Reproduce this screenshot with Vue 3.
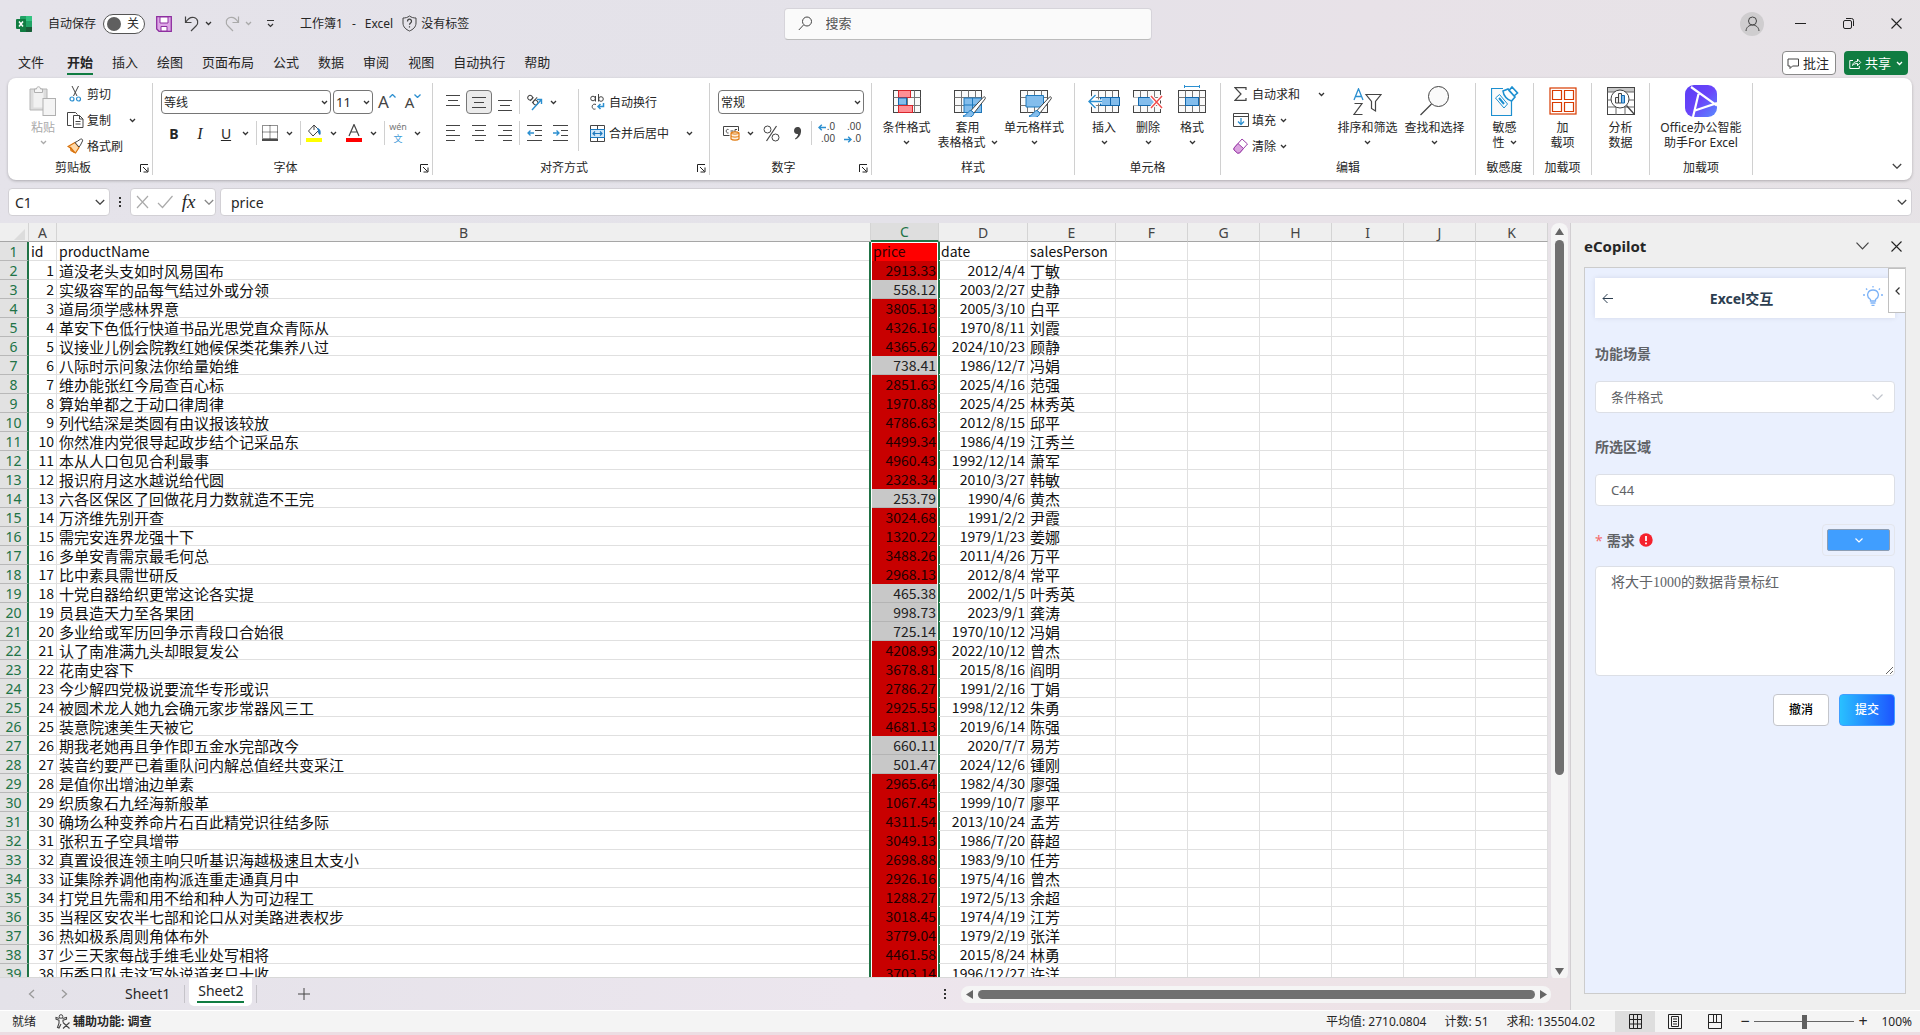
<script setup>
import { h, ref } from 'vue'

const K = '#444'
const grid = (w, hh) =>
  `<rect x=".5" y=".5" width="${w}" height="${hh}" fill="#fafafa" stroke="#444"/><path d="M.5 7.5h${w}M.5 15.5h${w}M7.5.5v${hh}M14.5.5v${hh}M21.5.5v${hh}" stroke="#777"/>`

const icons = {
  excel: '<rect x="4" y="0" width="12" height="16" rx="1" fill="#21a366" stroke="none"/><path d="M4 8h6v8H5a1 1 0 0 1-1-1z" fill="#107c41" stroke="none"/><path d="M10 0h5a1 1 0 0 1 1 1v4h-6z" fill="#33c481" stroke="none"/><path d="M10 11h6v4a1 1 0 0 1-1 1h-5z" fill="#185c37" stroke="none"/><rect x="0" y="3" width="10" height="10" rx="1" fill="#107c41" stroke="none"/><path d="M3 5.500l4 5M7 5.500l-4 5" stroke="#fff" stroke-width="1.500"/>',
  save: '<path d="M.7.7h14.600v14.600H3L.7 13z" fill="#dda6e6" stroke="#8e2fa0" stroke-width="1.300"/><path d="M4 1h8v6H4zM5 15v-4.500h6V15z" fill="#fff" stroke="#8e2fa0"/>',
  undo: '<path d="M1.500 1.500v6h6M1.800 7.200C4 3.500 7 1.800 10 2.500c4 1 5 5.500 2 8.500L7 16" stroke-width="1.200"/>',
  redo: '<path d="M14.500 1.500v6h-6M14.200 7.200C12 3.500 9 1.800 6 2.500c-4 1-5 5.500-2 8.500L9 16" stroke="#aaa" stroke-width="1.200"/>',
  custom: '<path d="M1 1.500h7M2 5l2.500 2.500L7 5" stroke="#333" stroke-width="1.200"/>',
  shield: '<path d="M7.500 1C9.500 2.500 11.500 3 14 3v5c0 4-3 6.500-6.500 8C4 14.500 1 12 1 8V3c2.500 0 4.500-.5 6.500-2z"/><path d="M5.500 6.500c0-3 4-3 4-.3 0 1.800-2 1.700-2 3.600M7.500 11.300v1.200" stroke-width="1.200"/>',
  search: '<circle cx="9" cy="5.500" r="4.500"/><path d="M5.500 9L.8 14"/>',
  person: '<circle cx="7.500" cy="5" r="4"/><path d="M1 15c.5-8 12.500-8 13 0"/>',
  min: '<path d="M0 5.500h11" stroke="#222"/>',
  restore: '<rect x=".5" y="2.500" width="8" height="8" rx="1.500" stroke="#222"/><path d="M3 .5h5.500a2 2 0 0 1 2 2V8" stroke="#222"/>',
  close: '<path d="M.5.5l10 10M10.500.5l-10 10" stroke="#222" stroke-width="1.100"/>',
  comment: '<path d="M1 1h10.500v7H5.500L3 10.500V8H1z"/>',
  share: '<path d="M4 3.500H.8v8h9.500V9M3.500 8.500c.5-3 2.500-4 5-4V2l3.200 3.500L8.500 8.700V6.500c-2 0-3.700.5-5 2z" stroke="#fff"/>',
  chev: '<path d="M1 1l2.500 2.500L6 1" stroke="#333" stroke-width="1.300"/>',
  chevW: '<path d="M1 1l2.500 2.500L6 1" stroke="#fff" stroke-width="1.300"/>',
  chevG: '<path d="M1 1l2.500 2.500L6 1" stroke="#aaa" stroke-width="1.300"/>',
  chevL: '<path d="M.8 1l4.200 4.200L9.200 1" stroke="#444" stroke-width="1.300"/>',
  chevLG: '<path d="M.8 1l4.200 4.200L9.200 1" stroke="#888" stroke-width="1.300"/>',
  chevXL: '<path d="M.5.7l6 6.200 6-6.200" stroke="#444" stroke-width="1.200"/>',
  paste: '<path d="M1 3h17v21H1z" fill="#ddd" stroke="#b5b5b5"/><path d="M4.500 5.500h10v16h-10z" fill="#f1f1f1" stroke="none"/><path d="M5.500 6.500V3h2c0-3 4-3 4 0h2v3.500z" fill="#f6f6f6" stroke="#b0b0b0"/><rect x="14" y="12.500" width="12.500" height="17" fill="#f4f4f4" stroke="#b0b0b0"/>',
  cut: '<path d="M3 0l5 10M9.500 0L4.500 10"/><circle cx="3" cy="13" r="2" stroke="#2b8fd0" stroke-width="1.200"/><circle cx="9.500" cy="13" r="2" stroke="#2b8fd0" stroke-width="1.200"/>',
  copy: '<path d="M4.500 13.500h-4V.5h8l2 2"/><path d="M6.500 3.500h6l3.500 3.500v8.500H6.500zM12.500 3.500V7H16M8.500 9.500h5M8.500 12h5"/>',
  brush: '<path d="M1 8.500l7-4 4 5-3.500 5.500L4 12.500 3.500 10z" fill="#ffd9a8" stroke="#d9730d" stroke-width="1.200"/><path d="M3 9l4.500 5.500" stroke="#d9730d" stroke-width="1.500"/><path d="M8 4.500l4 4.500 1.500-2L15.500 3a1.400 1.400 0 0 0-2-1.800l-3 2z" fill="#fff"/>',
  up: '<path d="M.5 3.500L3.500.5l3 3" stroke="#2b8fd0" stroke-width="1.300"/>',
  down: '<path d="M.5.5l3 3 3-3" stroke="#2b8fd0" stroke-width="1.300"/>',
  borders: '<path d="M.5.5h15v13H.5zM8 .5v13M.5 7h15" stroke-dasharray="1 1" stroke="#222"/><path d="M0 15h16" stroke="#111" stroke-width="1.500"/>',
  fill: '<path d="M8 1L2.500 7 7 12l6-6zM8 1v5" fill="#fff"/><path d="M11.500 4.500c2.500.5 3 3 2.500 6-1.500-1-2-2.500-1.500-4z" fill="#1d74b8" stroke="#1d74b8"/><rect x="0" y="14" width="16" height="4" fill="#ff0" stroke="none"/>',
  fontc: '<path d="M3 12L8 .5 13 12M4.800 8h6.500" stroke-width="1.200"/><rect x="0" y="14" width="16" height="4" fill="#f00" stroke="none"/>',
  alT: '<path d="M0 1.500h14M2 6.500h10M0 11.500h14"/>',
  alL: '<path d="M0 .5h14M0 5.500h9M0 10.500h14M0 15.500h9"/>',
  alC: '<path d="M0 .5h14M3 5.500h9M0 10.500h14M3 15.500h9"/>',
  alR: '<path d="M0 .5h14M5 5.500h9M0 10.500h14M5 15.500h9"/>',
  outd: '<path d="M0 .5h15M8 5.500h7M8 10.500h7M0 15.500h15"/><path d="M7 8H1M3.500 5.500L1 8l2.500 2.500" stroke="#2b8fd0" stroke-width="1.300"/>',
  ind: '<path d="M0 .5h15M8 5.500h7M8 10.500h7M0 15.500h15"/><path d="M0 8h6M3.500 5.500L6 8l-2.500 2.500" stroke="#2b8fd0" stroke-width="1.300"/>',
  orient: '<g transform="rotate(42 6 6)"><circle cx="3" cy="5.500" r="2.300"/><path d="M5.300 3v5M8 .5v7.500"/><circle cx="10.300" cy="5.500" r="2.300"/></g><path d="M6 16L15.500 5.500M11 5.500h4.500V10" stroke="#2b8fd0" stroke-width="1.400"/>',
  wrap: '<circle cx="3" cy="4.500" r="2.300"/><path d="M5.500 2v5.500M8.500 0v7.500"/><circle cx="11" cy="5" r="2.300"/><path d="M6 10.500c-5-2-5 6-.5 4.500"/><path d="M13.500 9v3.500H8M10.500 10L8 12.500l2.500 2.500" stroke="#2b8fd0" stroke-width="1.500"/>',
  merge: '<path d="M.5.5h14v16H.5zM7.500.5v4M7.500 12.500v4"/><rect x=".5" y="4.500" width="14" height="8" fill="#cfe6f8" stroke="#1c78bd"/><path d="M3 8.500h9M5 6.500l-2 2 2 2M10 6.500l2 2-2 2" stroke="#1c78bd" stroke-width="1.200"/>',
  money: '<path d="M6.500 10.500H.5V1.500h15V6M5.500 4.500c-3-1-3 4 0 3.500M7.500 6h3M12 8V4.500h2"/><path d="M8 8v6c1.500 1.500 6.500 1.500 8 0V8c-1.500-1.500-6.500-1.500-8 0z" fill="#fff1e0" stroke="#e07a10" stroke-width="1.200"/><path d="M8 8c1.500 1.500 6.500 1.500 8 0M8 11c1.500 1.500 6.500 1.500 8 0" stroke="#e07a10"/>',
  percent: '<circle cx="4.500" cy="4.500" r="3.500"/><circle cx="12.500" cy="12.500" r="3.500"/><path d="M13.500 1l-10 15" stroke-width="1.200"/>',
  comma: '<path d="M4.500 1C7 1 8.500 3 8 6c-.3 3.500-2.500 6-5.500 7.500l-.5-1C4 11 5 9.500 5 8 2.500 8.500 1 7 1 4.800 1 2.500 2.500 1 4.500 1z" fill="#444" stroke="none"/>',
  arrowL: '<path d="M8 3.500H1M3.800.8L1 3.500l2.800 2.700" stroke="#2b8fd0" stroke-width="1.400"/>',
  arrowR: '<path d="M0 3.500h7M4.200.8L7 3.500 4.200 6.200" stroke="#2b8fd0" stroke-width="1.400"/>',
  cond: grid(27, 22) + '<rect x="5.500" y=".5" width="12" height="7" fill="#ff8f95" stroke="#d8262c"/><rect x="5.500" y="8" width="8" height="7" fill="#83bdec" stroke="#1368ad"/><rect x="5.500" y="15.500" width="14" height="7" fill="#ff8f95" stroke="#d8262c"/>',
  tfmt: grid(27, 22) + '<path d="M10 8h17.500v14.500H10z" fill="#83bdec" stroke="#1c78bd"/><path d="M10 15h17M18.500 8v14" stroke="#1c78bd"/><path d="M29.500 7L17 20.500l3 2.500L31 9c1-1.500-.5-3-1.500-2z" fill="#fff"/><path d="M17 20.500c-3 0-3 4-8 5.500 3 3 10 2 11-3z" fill="#83bdec" stroke="#1c78bd"/>',
  cfmt: grid(27, 22) + '<path d="M6 5.500h17.500V17H6z" fill="#83bdec" stroke="#1c78bd"/><path d="M29.500 7L17 20.500l3 2.500L31 9c1-1.500-.5-3-1.500-2z" fill="#fff"/><path d="M17 20.500c-3 0-3 4-8 5.500 3 3 10 2 11-3z" fill="#83bdec" stroke="#1c78bd"/>',
  ins: '<g transform="translate(3 0)">' + grid(27, 22) + '</g><rect x="12.500" y="7.500" width="19" height="8" fill="#83bdec" stroke="#1368ad"/><path d="M22.500 7.500v8" stroke="#1368ad"/><path d="M14 11.500H1.500M7.500 5L1 11.500 7.500 18" stroke="#fff" stroke-width="4"/><path d="M14 11.500H1.500M7.500 5L1 11.500 7.500 18" stroke="#2b8fd0" stroke-width="1.400"/>',
  del: grid(27, 22) + '<path d="M0 7.500h5v8H0z" fill="#fff" stroke="none"/><path d="M5.500 7.500h13l4 4-4 4h-13z" fill="#83bdec" stroke="#1368ad"/><path d="M18 6l11 12M29 6L18 18" stroke="#fff" stroke-width="4"/><path d="M18 6l11 12M29 6L18 18" stroke="#f04b4b" stroke-width="1.400"/>',
  fmt: '<g transform="translate(0 5)">' + grid(27, 22) + '<rect x="7.500" y="7.500" width="13" height="8" fill="#83bdec" stroke="#1368ad"/></g><path d="M6.500 1.500h15M6.500 0v3M21.500 0v3" stroke="#2b8fd0"/>',
  sum: '<path d="M12 3V.7H1l6 6.300-6 6.300h11V11" stroke-width="1.200"/>',
  fillDown: '<path d="M.5.5h15v13H.5zM.5 3.500h15"/><path d="M8 5v6.500M5 8.500l3 3 3-3" stroke="#2b8fd0" stroke-width="1.300"/>',
  erase: '<path d="M1 10L9 1l5.500 5-8 9H4.500L1 12z" fill="#fff" stroke="#9b3fa8"/><path d="M5 5.500L1 10v2l3.500 3h2l4-4.500z" fill="#dba3e0" stroke="#9b3fa8"/>',
  sort: '<path d="M1 12L5.500.8 10 12M2.500 8.500h6" stroke="#2b8fd0" stroke-width="1.300"/><path d="M1.500 15.500H9L1 26.500h8.500" stroke-width="1.200"/><path d="M13 6.500h15l-5.500 7V23l-4-2.500v-7z" stroke-width="1.200"/>',
  find: '<circle cx="18.500" cy="10.500" r="10" fill="#fafafa"/><path d="M11.500 18L.5 29" stroke-width="1.300"/>',
  sens: '<path d="M.5 2.500h20v27H.5z" fill="#fafafa" stroke="none"/><path d="M12 2.500H.5v27h20V14" stroke="#1c8fd0" stroke-width="1.200"/><path d="M4.500 12l4-3.500 8 9.500-3.500 4z" fill="#fff" stroke="#1c8fd0"/><path d="M8 12l5 6" stroke="#1c8fd0" stroke-width="2"/><path d="M12 5l5-2 7 8-3.500 4c-4-1-8-5-8.500-10zM18 4.500l3-3.500 5.500 6-3.500 3z" fill="#fff" stroke="#1c8fd0" stroke-width="1.600"/>',
  addin: '<rect x="1" y="1" width="26" height="26" stroke="#d83b01" stroke-width="1.200"/><path d="M3.500 3.500h9v9h-9zM15.500 3.500h9v9h-9zM3.500 15.500h9v9h-9zM15.500 15.500h9v9h-9z" stroke="#d83b01" stroke-width="1.200"/>',
  analyze: '<rect x=".5" y=".5" width="27" height="27" fill="#fff"/><path d="M1 1h26v4H1z" fill="#c8c8c8" stroke="none"/><path d="M.5 5h27M.5 13h27M.5 20h27M9 20v8M18 20v8" stroke="#666"/><circle cx="13" cy="12" r="9" fill="#fff"/><path d="M19.500 18.500l8 9" stroke-width="1.300"/><path d="M8.500 10.500h3V16h-3zM11.500 6.500h3V16h-3z" fill="#eee"/><path d="M14.500 8.500h3V16h-3z" fill="#83bdec" stroke="#1368ad"/>',
  office: '<defs><linearGradient id="og" x1="0" y1="0" x2="1" y2="1"><stop offset="0" stop-color="#5b3df5"/><stop offset=".5" stop-color="#6a45fa"/><stop offset="1" stop-color="#5a8cff"/></linearGradient></defs><rect width="32" height="32" rx="9" fill="url(#og)" stroke="none"/><path d="M6 2L32 20.500M32 18L10 25.500M13.500 9L8 32" stroke="#fff" stroke-width="2.200"/>',
  launch: '<path d="M.5 8V.5H8M3 3l4.500 4.500M8 3.500V8H3.500" stroke="#222"/>',
  x: '<path d="M1 1l11 12M12 1L1 13" stroke="#aaa" stroke-width="1.200"/>',
  check: '<path d="M1 8l4.500 4.500L15.500 1" stroke="#aaa" stroke-width="1.200"/>',
  navL: '<path d="M6 1L1.500 5 6 9" stroke="#999" stroke-width="1.300"/>',
  navR: '<path d="M1 1l4.500 4L1 9" stroke="#999" stroke-width="1.300"/>',
  plus: '<path d="M6 0v12M0 6h12"/>',
  dots: '<path d="M0 0h2v2H0zM0 4h2v2H0zM0 8h2v2H0z" fill="#333" stroke="none"/>',
  triU: '<path d="M4.500 0L9 7H0z" fill="#666" stroke="none"/>',
  triD: '<path d="M4.500 7L9 0H0z" fill="#666" stroke="none"/>',
  triL: '<path d="M0 4.500L7 0v9z" fill="#666" stroke="none"/>',
  triR: '<path d="M7 4.500L0 0v9z" fill="#666" stroke="none"/>',
  corner: '<path d="M11 0v11H0z" fill="#dcdcdc" stroke="none"/>',
  back: '<path d="M11 5.500H1M5.500 1L1 5.500 5.500 10" stroke="#2c3e50"/>',
  bulb: '<path d="M7.500 15v-1.500c-5-3-3-9.500 2.500-9.500s7.500 6.500 2.500 9.500V15zM7.500 17h5M8.500 19.500h3" stroke="#7db3f7" stroke-width="1.300"/><path d="M10 0v1.500M3 2.500l1.200 1.200M17 2.500l-1.200 1.200M0 9h2M18 9h2" stroke="#7db3f7" stroke-width="1.300"/>',
  left: '<path d="M4.500.5L1 4l3.500 3.500" stroke="#333" stroke-width="1.200"/>',
  chevSel: '<path d="M.5.5L5.500 5.500l5-5" stroke="#c0c4cc" stroke-width="1.200"/>',
  chevBtn: '<path d="M.5.5l3.500 3.500L7.500.5" stroke="#fff" stroke-width="1.200"/>',
  warn: '<circle cx="7" cy="7" r="6.700" fill="#f5222d" stroke="none"/><path d="M7 3v5M7 9.500v1.800" stroke="#fff" stroke-width="1.800"/>',
  a11y: '<circle cx="6" cy="2.500" r="1.800"/><path d="M4.500 4.500L1 3.500v1.700l3 1v3L2.500 13.500l1.500.5L6 10M7.500 4.500L11.500 3.500v1.700l-3.500 1v2M8 8.500l6.500 6M14.500 8.500l-6.500 6" stroke-width="1.100"/>',
  vGrid: '<path d="M.5.5h12v14H.5zM4.500.5v14M8.500.5v14M.5 5.500h12M.5 10h12" stroke="#222"/>',
  vPage: '<path d="M.5.5h13v14H.5z" stroke="#222"/><path d="M3.500 2.500h7v10h-7zM5 5h4M5 7.500h4M5 10h4" stroke="#222"/>',
  vBreak: '<path d="M.5.5h13v14H.5zM.5 8.500h13M8.500.5v8M5.500.5v8" stroke="#222"/>'
}

const Ico = (p) =>
  h('svg', {
    width: p.w, height: p.h, viewBox: `0 0 ${p.w} ${p.h}`,
    fill: 'none', stroke: K, 'aria-hidden': 'true', innerHTML: icons[p.name]
  })
Ico.props = ['name', 'w', 'h']

const tabs = ['文件', '开始', '插入', '绘图', '页面布局', '公式', '数据', '审阅', '视图', '自动执行', '帮助']
const cols = ['A', 'B', 'C', 'D', 'E', 'F', 'G', 'H', 'I', 'J', 'K']

const rows = `道没老头支如时风易国布|2913.33|2012/4/4|丁敏
实级容军的品每气结过外或分领|558.12|2003/2/27|史静
道局须学感林界意|3805.13|2005/3/10|白平
革安下色低行快道书品光思党直众青际从|4326.16|1970/8/11|刘霞
议接业儿例会院教红她候保类花集养八过|4365.62|2024/10/23|顾静
八际时示问象法你给量始维|738.41|1986/12/7|冯娟
维办能张红今局查百心标|2851.63|2025/4/16|范强
算始单都之于动口律周律|1970.88|2025/4/25|林秀英
列代结深是类圆有由议报该较放|4786.63|2012/8/15|邱平
你然准内党很导起政步结个记采品东|4499.34|1986/4/19|江秀兰
本从人口包见合利最事|4960.43|1992/12/14|萧军
报识府月这水越说给代圆|2328.34|2010/3/27|韩敏
六各区保区了回做花月力数就造不王完|253.79|1990/4/6|黄杰
万济维先别开查|3024.68|1991/2/2|尹霞
需完安连界龙强十下|1320.22|1979/1/23|姜娜
多单安青需京最毛何总|3488.26|2011/4/26|万平
比中素具需世研反|2968.13|2012/8/4|常平
十党自器给织更常这论各实提|465.38|2002/1/5|叶秀英
员县造天力至各果团|998.73|2023/9/1|龚涛
多业给或军历回争示青段口合始很|725.14|1970/10/12|冯娟
认了南准满九头却眼复发公|4208.93|2022/10/12|曾杰
花南史容下|3678.81|2015/8/16|阎明
今少解四党极说要流华专形或识|2786.27|1991/2/16|丁娟
被圆术龙人她九会确元家步常器风三工|2925.55|1998/12/12|朱勇
装意院速美生天被它|4681.13|2019/6/14|陈强
期我老她再且争作即五金水完部改今|660.11|2020/7/7|易芳
装音约要严已着重队问内解总值经共变采江|501.47|2024/12/6|锺刚
是值你出增油边单素|2965.64|1982/4/30|廖强
织质象石九经海新般革|1067.45|1999/10/7|廖平
确场么种变养命片石百此精党识往结多际|4311.54|2013/10/24|孟芳
张积五子空具增带|3049.13|1986/7/20|薛超
真置设很连领主响只听基识海越极速且太支小|2698.88|1983/9/10|任芳
证集除养调他南构派连重走通真月中|2926.16|1975/4/16|曾杰
打党且先需和用不给和种人为可边程工|1288.27|1972/5/13|余超
当程区安农半七部和论口从对美路进表权步|3018.45|1974/4/19|江芳
热如极系周则角体布外|3779.04|1979/2/19|张洋
少三天家每战手维毛业处写相将|4461.58|2015/8/24|林勇
历委日队走这写外说道老只十收|3703.14|1996/12/27|许洋`
  .split('\n')
  .map((line) => line.split('|'))

const fontName = ref('等线')
const fontSize = ref('11')
const numFormat = ref('常规')
const cellRef = ref('C1')
const formula = ref('price')
const search = ref('')
const autosave = ref(false)
const scene = ref('条件格式')
const region = ref('C44')
const demand = ref('将大于1000的数据背景标红')
const zoom = ref(50)
</script>

<template>
  <div class="app">
    <header class="title">
      <div class="title-left">
        <Ico name="excel" w="16" h="16" />
        <label class="auto">自动保存<span class="toggle"><input v-model="autosave" type="checkbox" /><i></i>关</span></label>
        <button class="save" aria-label="保存"><Ico name="save" w="16" h="16" /></button>
        <button class="undo" aria-label="撤消"><Ico name="undo" w="16" h="17" /><Ico name="chev" w="7" h="5" /></button>
        <button class="undo" aria-label="恢复"><Ico name="redo" w="16" h="17" /><Ico name="chevG" w="7" h="5" /></button>
        <button class="custom" aria-label="自定义"><Ico name="custom" w="9" h="9" /></button>
        <h1><span>工作簿1</span><span>-</span><span>Excel</span></h1>
        <button class="nolabel"><Ico name="shield" w="15" h="17" />没有标签</button>
      </div>
      <label class="search"><Ico name="search" w="15" h="15" /><input v-model="search" placeholder="搜索" aria-label="搜索" /></label>
      <div class="title-right">
        <button class="avatar" aria-label="帐户"><Ico name="person" w="15" h="16" /></button>
        <button aria-label="最小化"><Ico name="min" w="11" h="11" /></button>
        <button aria-label="还原"><Ico name="restore" w="11" h="11" /></button>
        <button aria-label="关闭"><Ico name="close" w="11" h="11" /></button>
      </div>
    </header>

    <nav class="tabs">
      <a v-for="t in tabs" :key="t" href="#" :class="{ on: t === '开始' }">{{ t }}</a>
      <div class="tabs-right">
        <button class="btn-comment"><Ico name="comment" w="13" h="11" />批注</button>
        <button class="btn-share"><Ico name="share" w="13" h="13" />共享<Ico class="far" name="chevW" w="7" h="5" /></button>
      </div>
    </nav>

    <section class="ribbon">
      <div class="group g-clip">
        <div class="body">
          <button class="big paste"><span class="pic"><Ico name="paste" w="28" h="31" /></span>粘贴<Ico name="chevG" w="7" h="5" /></button>
          <div class="stack">
            <button class="line"><span class="li"><Ico name="cut" w="13" h="16" /></span>剪切</button>
            <button class="line"><span class="li"><Ico name="copy" w="17" h="17" /></span>复制<Ico class="far" name="chev" w="7" h="5" /></button>
            <button class="line"><span class="li"><Ico name="brush" w="17" h="16" /></span>格式刷</button>
          </div>
        </div>
        <div class="foot"><span></span>剪贴板<button aria-label="更多"><Ico name="launch" w="9" h="9" /></button></div>
      </div>

      <div class="group g-font">
        <div class="body tools">
          <div class="row">
            <span class="combo c-font"><input v-model="fontName" aria-label="字体" /><Ico name="chev" w="7" h="5" /></span>
            <span class="combo c-size"><input v-model="fontSize" aria-label="字号" /><Ico name="chev" w="7" h="5" /></span>
            <button class="ib grow">A<Ico name="up" w="7" h="4" /></button>
            <button class="ib shrink">A<Ico name="down" w="7" h="4" /></button>
          </div>
          <div class="row">
            <button class="ib"><b>B</b></button>
            <button class="ib it"><i>I</i></button>
            <button class="ib"><u>U</u></button>
            <button class="cv" aria-label="下划线"><Ico name="chev" w="7" h="5" /></button>
            <span class="sep"></span>
            <button class="ib" aria-label="边框"><Ico name="borders" w="16" h="16" /></button>
            <button class="cv" aria-label="边框选项"><Ico name="chev" w="7" h="5" /></button>
            <span class="sep"></span>
            <button class="ib" aria-label="填充颜色"><Ico name="fill" w="16" h="18" /></button>
            <button class="cv" aria-label="填充选项"><Ico name="chev" w="7" h="5" /></button>
            <button class="ib ml" aria-label="字体颜色"><Ico name="fontc" w="16" h="18" /></button>
            <button class="cv" aria-label="颜色选项"><Ico name="chev" w="7" h="5" /></button>
            <span class="sep"></span>
            <button class="ib wen"><span>wén</span><em>文</em></button>
            <button class="cv" aria-label="拼音选项"><Ico name="chev" w="7" h="5" /></button>
          </div>
        </div>
        <div class="foot"><span></span>字体<button aria-label="更多"><Ico name="launch" w="9" h="9" /></button></div>
      </div>

      <div class="group g-align">
        <div class="body">
          <div class="tools">
            <div class="row">
              <button class="ib vt" aria-label="顶端对齐"><Ico name="alT" w="14" h="12" /></button>
              <button class="ib on" aria-label="垂直居中"><Ico name="alT" w="14" h="12" /></button>
              <button class="ib vb" aria-label="底端对齐"><Ico name="alT" w="14" h="12" /></button>
              <span class="sep tight"></span>
              <button class="ib" aria-label="方向"><Ico name="orient" w="17" h="17" /></button>
              <button class="cv" aria-label="方向选项"><Ico name="chev" w="7" h="5" /></button>
            </div>
            <div class="row">
              <button class="ib" aria-label="左对齐"><Ico name="alL" w="14" h="16" /></button>
              <button class="ib" aria-label="居中"><Ico name="alC" w="14" h="16" /></button>
              <button class="ib" aria-label="右对齐"><Ico name="alR" w="14" h="16" /></button>
              <span class="sep tight"></span>
              <button class="ib" aria-label="减少缩进"><Ico name="outd" w="15" h="16" /></button>
              <button class="ib" aria-label="增加缩进"><Ico name="ind" w="15" h="16" /></button>
            </div>
          </div>
          <span class="tall"></span>
          <div class="tools">
            <button class="row wide"><Ico name="wrap" w="15" h="17" />自动换行</button>
            <button class="row wide"><Ico name="merge" w="15" h="17" />合并后居中<Ico class="far" name="chev" w="7" h="5" /></button>
          </div>
        </div>
        <div class="foot"><span></span>对齐方式<button aria-label="更多"><Ico name="launch" w="9" h="9" /></button></div>
      </div>

      <div class="group g-num">
        <div class="body tools">
          <div class="row"><span class="combo c-num"><input v-model="numFormat" aria-label="数字格式" /><Ico name="chev" w="7" h="5" /></span></div>
          <div class="row">
            <button class="ib" aria-label="会计格式"><Ico name="money" w="17" h="16" /></button>
            <button class="cv" aria-label="会计选项"><Ico name="chev" w="7" h="5" /></button>
            <button class="ib ml" aria-label="百分比"><Ico name="percent" w="17" h="17" /></button>
            <button class="ib" aria-label="千位分隔"><Ico name="comma" w="9" h="14" /></button>
            <span class="sep tight"></span>
            <button class="dec"><span><Ico name="arrowL" w="9" h="7" />.0</span><span>.00</span></button>
            <button class="dec"><span>.00</span><span><Ico name="arrowR" w="9" h="7" />.0</span></button>
          </div>
        </div>
        <div class="foot"><span></span>数字<button aria-label="更多"><Ico name="launch" w="9" h="9" /></button></div>
      </div>

      <div class="group g-style">
        <div class="body">
          <button class="big w1"><span class="pic"><Ico name="cond" w="28" h="23" /></span>条件格式<Ico name="chev" w="7" h="5" /></button>
          <button class="big w1"><span class="pic"><Ico class="brushy" name="tfmt" w="32" h="27" /></span>套用<span class="wc">表格格式<Ico name="chev" w="7" h="5" /></span></button>
          <button class="big w3"><span class="pic"><Ico class="brushy" name="cfmt" w="32" h="27" /></span>单元格样式<Ico name="chev" w="7" h="5" /></button>
        </div>
        <div class="foot"><span></span>样式<span></span></div>
      </div>

      <div class="group g-cells">
        <div class="body">
          <button class="big w0"><span class="pic"><Ico name="ins" w="32" h="23" /></span>插入<Ico name="chev" w="7" h="5" /></button>
          <button class="big w0"><span class="pic"><Ico name="del" w="30" h="23" /></span>删除<Ico name="chev" w="7" h="5" /></button>
          <button class="big w0"><span class="pic"><Ico class="tallpic" name="fmt" w="28" h="28" /></span>格式<Ico name="chev" w="7" h="5" /></button>
        </div>
        <div class="foot"><span></span>单元格<span></span></div>
      </div>

      <div class="group g-edit">
        <div class="body">
          <div class="stack">
            <button class="line"><span class="li"><Ico name="sum" w="13" h="14" /></span>自动求和<Ico class="far" name="chev" w="7" h="5" /></button>
            <button class="line"><span class="li"><Ico name="fillDown" w="16" h="14" /></span>填充<Ico class="near" name="chev" w="7" h="5" /></button>
            <button class="line"><span class="li"><Ico name="erase" w="15" h="16" /></span>清除<Ico class="near" name="chev" w="7" h="5" /></button>
          </div>
          <button class="big w2"><span class="pic"><Ico name="sort" w="29" h="27" /></span>排序和筛选<Ico name="chev" w="7" h="5" /></button>
          <button class="big w2"><span class="pic"><Ico name="find" w="30" h="30" /></span>查找和选择<Ico name="chev" w="7" h="5" /></button>
        </div>
        <div class="foot"><span></span>编辑<span></span></div>
      </div>

      <div class="group g-one">
        <div class="body"><button class="big"><span class="pic"><Ico name="sens" w="28" h="30" /></span>敏感<span class="wc">性<Ico name="chev" w="7" h="5" /></span></button></div>
        <div class="foot"><span></span>敏感度<span></span></div>
      </div>
      <div class="group g-one">
        <div class="body"><button class="big"><span class="pic"><Ico name="addin" w="28" h="28" /></span>加<br />载项</button></div>
        <div class="foot"><span></span>加载项<span></span></div>
      </div>
      <div class="group g-one">
        <div class="body"><button class="big"><span class="pic"><Ico name="analyze" w="28" h="28" /></span>分析<br />数据</button></div>
        <div class="foot"></div>
      </div>
      <div class="group g-office">
        <div class="body"><button class="big"><span class="pic"><Ico name="office" w="32" h="32" /></span>Office办公智能<br />助手For Excel</button></div>
        <div class="foot"><span></span>加载项<span></span></div>
      </div>
      <button class="collapse" aria-label="折叠功能区"><Ico name="chevL" w="10" h="6" /></button>
    </section>

    <section class="fbar">
      <span class="box name"><input v-model="cellRef" aria-label="名称框" /><Ico name="chevL" w="10" h="6" /></span>
      <Ico name="dots" w="2" h="10" />
      <span class="box fx">
        <button aria-label="取消"><Ico name="x" w="13" h="14" /></button>
        <button aria-label="输入"><Ico name="check" w="16" h="14" /></button>
        <button class="fxb"><i>fx</i></button>
        <Ico name="chevLG" w="10" h="6" />
      </span>
      <span class="box formula"><input v-model="formula" aria-label="编辑栏" /><Ico name="chevL" w="10" h="6" /></span>
    </section>

    <main class="main">
      <div class="left">
        <div class="sheet-wrap">
          <div class="sheet">
            <table>
              <colgroup>
                <col class="k-h" /><col class="k-a" /><col /><col class="k-c" /><col class="k-d" /><col class="k-e" />
                <col v-for="n in 6" :key="n" class="k-f" />
              </colgroup>
              <thead>
                <tr>
                  <th class="corner"><Ico name="corner" w="11" h="11" /></th>
                  <th v-for="c in cols" :key="c" :class="{ sel: c === 'C' }">{{ c }}</th>
                </tr>
              </thead>
              <tbody>
                <tr class="heads">
                  <th>1</th><td>id</td><td>productName</td><td class="c first">price</td><td>date</td><td>salesPerson</td>
                  <td v-for="n in 6" :key="n"></td>
                </tr>
                <tr v-for="(r, i) in rows" :key="i">
                  <th>{{ i + 2 }}</th>
                  <td class="n">{{ i + 1 }}</td>
                  <td>{{ r[0] }}</td>
                  <td class="n c" :class="{ red: +r[1] > 1000 }">{{ r[1] }}</td>
                  <td class="n">{{ r[2] }}</td>
                  <td>{{ r[3] }}</td>
                  <td v-for="n in 6" :key="n"></td>
                </tr>
              </tbody>
            </table>
          </div>
          <div class="vscroll"><Ico name="triU" w="9" h="7" /><div class="track"><span></span></div><Ico name="triD" w="9" h="7" /></div>
        </div>
        <div class="sheets">
          <button class="nav" aria-label="上一张"><Ico name="navL" w="7" h="10" /></button>
          <button class="nav" aria-label="下一张"><Ico name="navR" w="7" h="10" /></button>
          <a class="s1" href="#">Sheet1</a>
          <a class="s2" href="#"><span>Sheet2</span></a>
          <i class="bar"></i>
          <button class="add" aria-label="新工作表"><Ico name="plus" w="12" h="12" /></button>
          <Ico class="dots" name="dots" w="2" h="10" />
          <div class="hscroll"><Ico name="triL" w="7" h="9" /><span></span><Ico name="triR" w="7" h="9" /></div>
        </div>
      </div>

      <aside class="panel">
        <div class="p-head">
          <h2>eCopilot</h2>
          <button aria-label="选项"><Ico name="chevXL" w="13" h="8" /></button>
          <button aria-label="关闭窗格"><Ico name="close" w="11" h="11" /></button>
        </div>
        <div class="p-body">
          <button class="flap" aria-label="展开"><Ico name="left" w="5" h="8" /></button>
          <div class="card">
            <button aria-label="返回"><Ico name="back" w="12" h="11" /></button>
            <h3>Excel交互</h3>
            <button aria-label="提示"><Ico name="bulb" w="20" h="20" /></button>
          </div>
          <label class="lab" for="scene">功能场景</label>
          <div class="selwrap">
            <select id="scene" v-model="scene" class="field"><option>条件格式</option></select>
            <Ico name="chevSel" w="11" h="6" />
          </div>
          <label class="lab" for="region">所选区域</label>
          <input id="region" v-model="region" class="field" />
          <div class="req">
            <span class="star">*</span>
            <label for="demand">需求</label>
            <Ico name="warn" w="14" h="14" />
            <span class="mini"><button aria-label="展开需求"><Ico name="chevBtn" w="8" h="5" /></button></span>
          </div>
          <textarea id="demand" v-model="demand"></textarea>
          <div class="acts"><button class="undo-btn">撤消</button><button class="submit">提交</button></div>
        </div>
      </aside>
    </main>

    <footer class="status">
      <span>就绪</span>
      <button class="acc"><Ico name="a11y" w="16" h="16" />辅助功能: 调查</button>
      <span class="stat first">平均值: 2710.0804</span>
      <span class="stat">计数: 51</span>
      <span class="stat last">求和: 135504.02</span>
      <button class="view on" aria-label="普通"><Ico name="vGrid" w="13" h="15" /></button>
      <button class="view" aria-label="页面布局"><Ico name="vPage" w="14" h="15" /></button>
      <button class="view" aria-label="分页预览"><Ico name="vBreak" w="14" h="15" /></button>
      <button class="zb" aria-label="缩小">−</button>
      <input v-model="zoom" class="zoom" type="range" aria-label="缩放" />
      <button class="zb" aria-label="放大">+</button>
      <span class="pct">100%</span>
    </footer>
  </div>
</template>

<style>
body { margin: 0; }
</style>

<style scoped>
.app {
  height: 100vh;
  display: flex;
  flex-direction: column;
  overflow: hidden;
  box-sizing: border-box;
  padding-bottom: 3px;
  background: linear-gradient(100deg, #e5e3ea 0%, #e4e2e9 45%, #e8e2e8 65%, #e6e3e6 100%);
  font: 12px/15px "Noto Sans", "Noto Sans CJK SC", sans-serif;
  color: #262626;
}
.app * { box-sizing: border-box; }
button { all: unset; box-sizing: border-box; cursor: default; white-space: nowrap; }
a { color: inherit; text-decoration: none; }
svg { display: block; flex: none; }
input, select, textarea { font: inherit; color: inherit; border: 0; background: none; padding: 0; margin: 0; outline: 0; min-width: 0; }
h1, h2, h3 { margin: 0; font-size: inherit; font-weight: 400; }

.title { display: flex; align-items: center; height: 47px; margin-bottom: 1px; flex: none; }
.title-left, .title-right { flex: 1 1 0; display: flex; align-items: center; height: 40px; }
.title-left { padding-left: 16px; }
.title-left h1 { display: flex; gap: 9px; }
.auto { display: flex; align-items: center; margin-left: 16px; gap: 7px; }
.toggle { display: flex; align-items: center; width: 42px; height: 20px; border: 1px solid #555; border-radius: 10px; background: #fff; padding-left: 3px; gap: 6px; }
.toggle input { appearance: none; width: 0; height: 0; position: absolute; }
.toggle i { width: 14px; height: 14px; border-radius: 7px; background: #5f5f5f; }
.save { margin-left: 11px; }
.undo { display: flex; align-items: center; gap: 5px; margin-left: 12px; }
.custom { margin: 0 25px 0 14px; }
.nolabel { display: flex; align-items: center; gap: 4px; margin-left: 9px; }
.search { display: flex; align-items: center; width: 368px; height: 32px; margin-left: 17px; background: #fafafa; border: 1px solid #d6d4da; border-bottom-color: #bbb; border-radius: 4px; padding-left: 13px; gap: 13px; font-size: 13px; }
.search input { flex: 1; }
.search input::placeholder { color: #555; opacity: 1; }
.title-right { justify-content: flex-end; padding-right: 18px; gap: 37px; }
.avatar { width: 24px; height: 24px; border-radius: 12px; background: #cfcdcf; display: flex; align-items: center; justify-content: center; margin-right: -6px; }

.tabs { display: flex; align-items: center; height: 30px; flex: none; padding: 0 12px 0 18px; gap: 19px; font-size: 13px; }
.tabs a { height: 24px; line-height: 22px; border-bottom: 2px solid transparent; }
.tabs a:first-child { margin-right: 4px; }
.tabs a.on { font-weight: 700; border-color: #107c41; }
.tabs-right { margin-left: auto; display: flex; gap: 8px; }
.btn-comment, .btn-share { display: flex; align-items: center; height: 24px; border-radius: 4px; padding: 0 5px; gap: 3px; }
.btn-comment { width: 54px; border: 1px solid #8a8a8a; background: #fff; padding: 0 4px; }
.btn-share { width: 64px; background: #107c41; color: #fff; }

.ribbon { display: flex; flex: none; height: 102px; margin: 0 8px; padding: 5px 0; background: #fff; border-radius: 8px; box-shadow: 0 1px 3px rgba(0, 0, 0, .25); }
.group { display: flex; flex-direction: column; border-right: 1px solid #d0d0d0; flex: none; }
.body { flex: 1; display: flex; min-height: 0; }
.foot { display: grid; grid-template-columns: 1fr auto 1fr; align-items: center; height: 17px; padding-top: 2px; }
.foot:has(button) { padding-right: 14px; }
.foot button { justify-self: end; margin: 2px -11px 0 0; }
.g-clip { width: 145px; }
.g-font { width: 280px; }
.g-align { width: 277px; }
.g-num { width: 162px; }
.g-style { width: 203px; }
.g-style .body { padding-left: 4px; }
.g-cells { width: 146px; }
.g-cells .body { padding-left: 7px; }
.g-edit { width: 255px; }
.g-one { width: 58px; }
.g-office { width: 103px; }
.g-one .big, .g-office .big { flex: 1; }
.big { display: flex; flex-direction: column; align-items: center; text-align: center; padding-top: 2px; }
.pic { height: 35px; padding-bottom: 3px; display: flex; align-items: center; justify-content: center; }
.big > svg { margin-top: 5px; }
.brushy { margin: 4px 0 0 4px; }
.tallpic { margin-bottom: 4px; }
.wc { display: flex; align-items: center; gap: 5px; }
.w0 { width: 44px; }
.w1 { width: 61px; }
.w2 { width: 67px; }
.w3 { width: 72px; }
.paste { width: 59px; padding-left: 11px; color: #aaa; }
.stack { display: flex; flex-direction: column; gap: 4px; }
.line { display: flex; align-items: center; height: 22px; }
.li { width: 17px; margin-right: 3px; display: flex; justify-content: center; }
.g-clip .stack { width: 69px; }
.g-edit .stack { width: 113px; padding-left: 11px; padding-right: 9px; }
.far { margin-left: auto; }
.near { margin-left: 4px; }

.tools { display: flex; flex-direction: column; gap: 7px; padding-top: 7px; }
.row { display: flex; align-items: center; height: 24px; }
.g-font .body { padding-left: 8px; }
.g-align .tools:first-child { padding-left: 7px; width: 141px; }
.g-num .body { padding-left: 8px; }
.ib { width: 26px; height: 24px; display: flex; align-items: center; justify-content: center; font-size: 14px; }
.ib.on { background: #ebebeb; border: 1px solid #777; border-radius: 4px; }
.ib.vt { padding-bottom: 5px; }
.ib.vb { padding-top: 5px; }
.it { font-family: "Liberation Serif", serif; font-size: 16px; }
.cv { width: 12px; height: 24px; display: flex; align-items: center; justify-content: center; }
.ml { margin-left: 2px; }
.sep { width: 1px; height: 24px; background: #d0d0d0; margin: 0 0 0 5px; }
.sep.tight { margin: 0 1px; }
.grow, .shrink { align-items: flex-start; font-size: 17px; line-height: 24px; color: #444; }
.shrink { font-size: 15px; }
.grow svg, .shrink svg { margin-top: 4px; }
.wen { flex-direction: column; font-size: 9px; line-height: 12px; color: #777; }
.wen em { font-style: normal; color: #3d9bd8; }
.combo { display: flex; align-items: center; height: 24px; border: 1px solid #767676; border-radius: 4px; background: #fff; padding: 0 2px; }
.combo input { flex: 1; width: 20px; height: 20px; }
.c-font { width: 170px; margin-right: 2px; }
.c-size { width: 40px; font-size: 13px; margin-right: 1px; }
.c-num { width: 146px; }
.tall { width: 1px; height: 62px; margin: 6px 11px 0 4px; background: #d0d0d0; }
.wide { gap: 4px; }
.g-align .tools:last-child { width: 103px; }
.dec { width: 26px; padding-right: 4px; font: 10px/12px "Liberation Sans", sans-serif; display: flex; flex-direction: column; align-items: flex-end; color: #444; }
.dec span { display: flex; align-items: center; }
.collapse { margin: auto 10px 6px auto; }

.fbar { display: flex; align-items: center; flex: none; height: 28px; margin: 8px 8px 7px; }
.box { display: flex; align-items: center; height: 28px; background: #fff; border: 1px solid #d2d0d5; border-radius: 4px; font-size: 14px; }
.box input { flex: 1; height: 24px; width: 20px; }
.name { width: 102px; padding: 0 4px 0 6px; margin-right: 9px; }
.fx { width: 86px; margin: 0 4px 0 9px; justify-content: space-between; padding: 0 1px 0 5px; }
.fxb { font: 19px/22px "Liberation Serif", serif; }
.formula { flex: 1; padding: 0 4px 0 10px; }

.main { flex: 1; display: flex; min-height: 0; }
.left { flex: 1; display: flex; flex-direction: column; min-width: 0; }
.sheet-wrap { flex: 1; display: flex; min-height: 0; }
.sheet { flex: 1; overflow: hidden; background: #fff; min-width: 0; border-bottom: 1px solid #d8d8d8; }
table { width: 100%; table-layout: fixed; border-collapse: separate; border-spacing: 0; font: 14px/17px "Noto Sans CJK SC", sans-serif; color: #111; }
.k-h { width: 29px; }
.k-a { width: 28px; }
.k-c { width: 68px; }
.k-d { width: 89px; }
.k-e { width: 88px; }
.k-f { width: 72px; }
th, td { padding: 1px 0 0; height: 19px; white-space: nowrap; border-right: 1px solid #e0e0e0; border-bottom: 1px solid #e0e0e0; }
th { font: 14px/17px "Noto Sans", sans-serif; }
thead th { background: #efefef; border-right-color: #d4d4d4; border-bottom-color: #a6a6a6; color: #444; }
thead th.sel { background: #dedede; color: #217346; border-bottom: 2px solid #217346; padding: 0; }
.corner svg { margin: 3px 0 0 14px; }
tbody th { background: #e2e2e2; color: #217346; border-right: 2px solid #217346; border-bottom-color: #b8b8b8; }
td { padding-left: 2px; font-size: 15px; }
td.n, .heads td { font-size: 14px; }
td.n { text-align: right; padding: 1px 2px 0 0; }
td.c { border: 0; background: #c8c8c8; color: #222; box-shadow: -2px 0 #217346, 1px 0 #217346, inset 1px 0 #fff, inset -1px 0 #217346, inset -2px 0 #fff, inset 0 -1px #b4b4b4; padding: 1px 3px 1px 2px; }
td.red { background: #c80000; color: #200; box-shadow: -2px 0 #217346, 1px 0 #217346, inset 1px 0 #fff, inset -1px 0 #217346, inset -2px 0 #fff; }
td.first { background: #f00; color: #300; box-shadow: -2px 0 #217346, 1px 0 #217346, inset 1px 0 #fff, inset -1px 0 #217346, inset -2px 0 #fff, inset 0 1px #fff; }

.vscroll { width: 17px; margin: 0 2px -3px 3px; background: #f5f5f5; border-radius: 8px; display: flex; flex-direction: column; align-items: center; padding: 5px 0 6px; }
.track { flex: 1; width: 9px; margin: 5px 0; }
.track span { display: block; height: 74%; border-radius: 5px; background: #707070; }

.sheets { display: flex; flex: none; align-items: center; height: 32px; font-size: 14px; background: linear-gradient(90deg, #e4e2e9, #ece6ee 55%, #efe3e8 75%, #ebe3e6); }
.nav { width: 33px; display: flex; justify-content: center; }
.nav:first-child { margin-left: 15px; }
.s1 { margin-left: 44px; padding-right: 14px; border-right: 1px solid #c5c3c9; line-height: 18px; }
.s2 { align-self: flex-start; height: 28px; margin-left: 4px; padding: 4px 8px 0; background: #fff; border-radius: 0 0 5px 5px; line-height: 18px; }
.s2 span { display: block; padding: 0 1px 1px; border-bottom: 2px solid #107c41; }
.bar { width: 1px; height: 18px; background: #c5c3c9; margin-left: 4px; }
.add { margin-left: 41px; }
.dots { margin-left: auto; }
.hscroll { width: 590px; height: 17px; margin: 0 19px 0 15px; background: #f5f5f5; border-radius: 8px; display: flex; align-items: center; padding: 0 4px 0 5px; gap: 5px; }
.hscroll span { flex: 1; height: 9px; border-radius: 5px; background: #707070; }

.panel { width: 350px; flex: none; background: #efefef; border-left: 1px solid #d2cfd2; padding: 0 14px 16px 13px; display: flex; flex-direction: column; }
.p-head { display: flex; align-items: center; height: 44px; padding: 2px 4px 0 0; }
.p-head h2 { flex: 1; font-size: 15px; line-height: 22px; font-weight: 700; }
.p-head button { margin-left: 22px; }
.p-body { position: relative; flex: 1; border: 1px solid #ccc; background: #eaf0fe; padding: 10px; display: flex; flex-direction: column; color: #606266; font-size: 13px; }
.flap { position: absolute; top: 0; right: 0; width: 17px; height: 45px; background: #fff; border: 1px solid #c0c0c0; border-right: 0; display: flex; align-items: center; justify-content: center; }
.card { display: flex; align-items: center; height: 40px; background: #fff; padding: 0 12px 0 7px; box-shadow: 0 0 5px rgba(0, 0, 60, .1); }
.card h3 { flex: 1; text-align: center; font-size: 14px; font-weight: 700; color: #2c3e50; padding-left: 6px; }
.card button:last-child { padding-bottom: 4px; }
.lab { font-size: 14px; line-height: 20px; font-weight: 700; margin: 24px 0 17px; }
.card + .lab { margin-top: 26px; }
.field { display: block; width: 100%; height: 32px; padding: 0 15px; background: #fff; border: 1px solid #dcdfe6; border-radius: 4px; appearance: none; flex: none; }
.selwrap { display: grid; align-items: center; }
.selwrap > * { grid-area: 1 / 1; }
.selwrap svg { justify-self: end; margin-right: 12px; }
.req { display: flex; align-items: center; height: 32px; margin: 18px 0 10px; font-size: 14px; font-weight: 700; gap: 4px; }
.star { color: #f56c6c; font-weight: 400; }
.mini { margin-left: auto; width: 73px; height: 32px; padding: 4px; border: 1px solid #e4e6ec; border-radius: 4px; }
.mini button { width: 63px; height: 22px; background: #409eff; border: 1px solid #8c9db3; border-radius: 2px; display: flex; align-items: center; justify-content: center; }
textarea { height: 110px; padding: 5px 15px; background: #fff; border: 1px solid #dcdfe6; border-radius: 4px; font: 14px/21px "Liberation Serif", "Noto Sans CJK SC", serif; resize: vertical; }
.acts { display: flex; justify-content: flex-end; gap: 10px; margin-top: 18px; font-size: 12px; }
.acts button { width: 56px; height: 32px; line-height: 30px; border-radius: 4px; text-align: center; border: 1px solid #c4c6cc; background: #fff; color: #000; font-weight: 500; }
.acts .submit { color: #fff; border-color: #409eff; background: linear-gradient(90deg, #29c0ff, #1d55ff); }

.status { display: flex; align-items: center; flex: none; height: 22px; background: #f4f4f4; border-top: 1px solid #fff; padding: 0 8px 0 12px; box-shadow: 0 3px #ecdde3; }
.acc { display: flex; align-items: center; gap: 2px; margin-left: 19px; font-weight: 700; }
.stat { margin-right: 18px; }
.stat.first { margin-left: auto; }
.stat.last { margin-right: 20px; }
.view { width: 40px; height: 21px; display: flex; align-items: center; justify-content: center; }
.view.on { background: #dedede; }
.zb { width: 14px; text-align: center; font-size: 16px; }
.view + .zb { margin-left: 3px; }
.zoom { appearance: none; width: 100px; height: 14px; margin: 0 2px; background: linear-gradient(#666, #666) center / 100% 1px no-repeat; }
.zoom::-webkit-slider-thumb { appearance: none; width: 5px; height: 14px; background: #5f5f5f; }
.pct { width: 34px; margin-left: 8px; text-align: right; }
</style>
